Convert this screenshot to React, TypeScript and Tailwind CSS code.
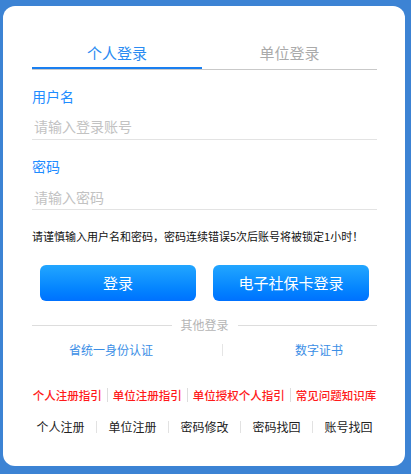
import { useState } from "react";

const font = { fontFamily: '"Noto Sans CJK SC", "Noto Sans", sans-serif' };

const guideLinks = ["个人注册指引", "单位注册指引", "单位授权个人指引", "常见问题知识库"];
const bottomLinks = ["个人注册", "单位注册", "密码修改", "密码找回", "账号找回"];

export default function App() {
  const [tab, setTab] = useState<number>(0);

  return (
    <div className="w-[411px] h-[474px] bg-[#3c83d4] pt-[6px] pl-[3px] overflow-hidden" style={font}>
      <div className="w-[402px] h-[460px] bg-white rounded-[12px] pt-[37px] pl-[29px] pr-[28px]">
        {/* Tabs */}
        <div className="flex border-b border-[#c9c9c9]">
          {["个人登录", "单位登录"].map((t, i) => (
            <button
              key={t}
              type="button"
              onClick={() => setTab(i)}
              className={`h-[26px] pb-[4px] text-[15px] leading-[20px] text-center ${i === 0 ? "w-[170px]" : "flex-1"} ${
                tab === i ? "text-[#2a8bf2] border-b-2 border-[#1a7ff0]" : "text-[#aaaaaa] border-b-2 border-transparent"
              }`}
            >
              {t}
            </button>
          ))}
        </div>

        {/* Username */}
        <div className="mt-[16px] text-[14px] leading-[20px] text-[#1e8cff]">用户名</div>
        <div className="mt-[10px] pb-[3px] border-b border-[#e3e3e3]">
          <input
            className="block w-full h-[20px] pl-[2px] text-[14px] leading-[20px] outline-none placeholder:text-[#c2c2c2]"
            placeholder="请输入登录账号"
          />
        </div>

        {/* Password */}
        <div className="mt-[16px] text-[14px] leading-[20px] text-[#1e8cff]">密码</div>
        <div className="mt-[11px] pb-[2px] border-b border-[#e3e3e3]">
          <input
            type="password"
            className="block w-full h-[20px] pl-[2px] text-[14px] leading-[20px] outline-none placeholder:text-[#c2c2c2]"
            placeholder="请输入密码"
          />
        </div>

        <p className="mt-[18px] text-[11px] leading-[16px] text-[#111] whitespace-nowrap">
          请谨慎输入用户名和密码，密码连续错误5次后账号将被锁定1小时！
        </p>

        {/* Buttons */}
        <div className="mt-[21px] flex gap-[17px] pl-[8px]">
          <button type="button" className="w-[156px] h-[36px] rounded-[6px] bg-gradient-to-b from-[#22a6ff] to-[#0071ff] text-white text-[15px]">
            登录
          </button>
          <button type="button" className="w-[156px] h-[36px] rounded-[6px] bg-gradient-to-b from-[#22a6ff] to-[#0071ff] text-white text-[15px]">
            电子社保卡登录
          </button>
        </div>

        {/* Other login */}
        <div className="mt-[16px] flex items-center">
          <div className="flex-1 h-px bg-[#dddddd]" />
          <span className="px-[9px] text-[12px] leading-[16px] text-[#b5b5b5]">其他登录</span>
          <div className="flex-1 h-px bg-[#dddddd]" />
        </div>
        <div className="mt-[9px] flex items-center text-[12px] leading-[16px] text-[#3a8ee6] whitespace-nowrap">
          <a className="ml-[37px] cursor-pointer">省统一身份认证</a>
          <span className="ml-[69px] w-px h-[12px] bg-[#e5e5e5]" />
          <a className="ml-[72px] cursor-pointer">数字证书</a>
        </div>

        {/* Guides */}
        <div className="mt-[29px] flex items-center justify-center text-[11.5px] leading-[16px] text-[#ff1a1a] font-medium whitespace-nowrap">
          {guideLinks.map((l, i) => (
            <div key={l} className="flex items-center">
              {i > 0 && <span className="mx-[5px] w-px h-[14px] bg-[#dddddd]" />}
              <a className="cursor-pointer">{l}</a>
            </div>
          ))}
        </div>

        <div className="mt-[16px] flex items-center justify-center text-[12px] leading-[16px] text-[#222]">
          {bottomLinks.map((l, i) => (
            <div key={l} className="flex items-center">
              {i > 0 && <span className="w-px h-[12px] bg-[#e2e2e2]" />}
              <a className="w-[71px] text-center cursor-pointer">{l}</a>
            </div>
          ))}
        </div>
      </div>
    </div>
  );
}
